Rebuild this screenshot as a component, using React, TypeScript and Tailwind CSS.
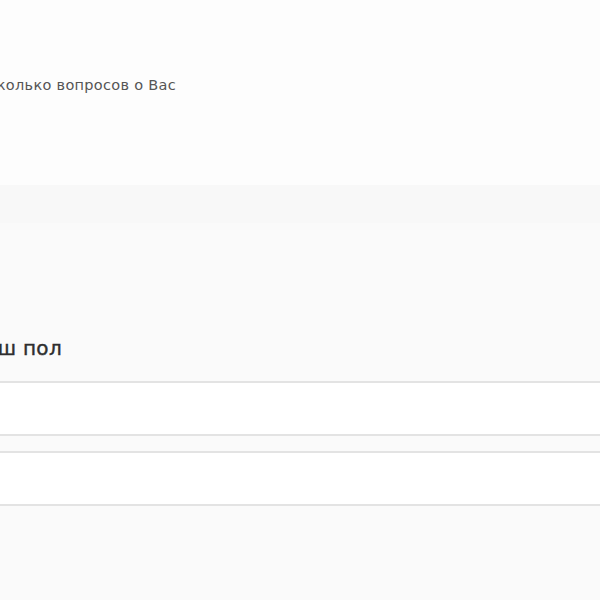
import React from "react";

const options = ["Мужской", "Женский"];

const App: React.FC = () => {
  return (
    <div className="h-[600px] w-[600px] overflow-hidden bg-[#fafafa] font-['DejaVu_Sans',sans-serif]">
      <div className="h-[185px] bg-[#fdfdfd] pt-[75px]">
        <p className="flex w-[176px] justify-end whitespace-nowrap text-[14.5px] leading-[20px] tracking-[0.3px] text-[#555]">
          Ответьте на несколько вопросов о Вас
        </p>
      </div>
      <div className="h-[38px] bg-[#f8f8f8]" />
      <div className="pt-[111px]">
        <h2 className="flex w-[62px] justify-end whitespace-nowrap text-[20px] leading-[28px] tracking-[0.3px] text-[#2e2e2e] [-webkit-text-stroke:0.4px_#2e2e2e]">
          Ваш пол
        </h2>
        <div className="mt-[19px] flex flex-col gap-[15px]">
          {options.map((o) => (
            <div
              key={o}
              aria-label={o}
              className="h-[55px] border-y-2 border-[#e3e3e3] bg-white"
            />
          ))}
        </div>
      </div>
    </div>
  );
};

export default App;
